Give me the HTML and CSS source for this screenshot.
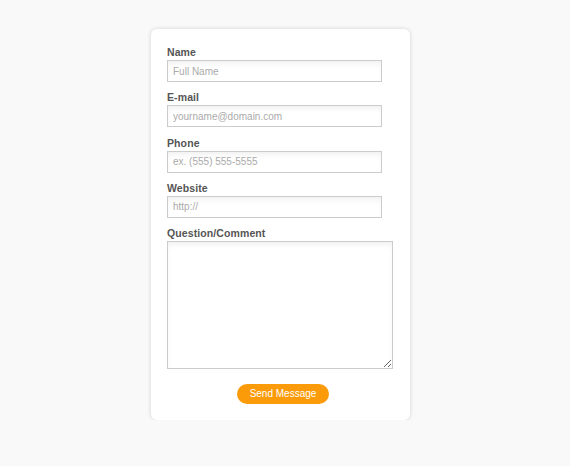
FILE: index.html
```html
<!DOCTYPE html>
<html lang="en">
<head>
  <meta charset="UTF-8">
  <title>Contact Form</title>
  <link rel="stylesheet" href="styles.css">
</head>
<body>

<form class="card" onsubmit="return false">
  <label for="name">Name</label>
  <input type="text" id="name" placeholder="Full Name">

  <label for="email">E-mail</label>
  <input type="text" id="email" placeholder="yourname@domain.com">

  <label for="phone">Phone</label>
  <input type="text" id="phone" placeholder="ex. (555) 555-5555">

  <label for="website">Website</label>
  <input type="text" id="website" placeholder="http://">

  <label for="comment">Question/Comment</label>
  <textarea id="comment"></textarea>

  <div class="actions">
    <button type="submit">Send Message</button>
  </div>
</form>

</body>
</html>
```

FILE: styles.css
```css
body { margin: 0; background: #f9f9f9; font-family: "Liberation Sans", Arial, sans-serif; }
.card { width: 259px; box-sizing: border-box; margin: 29px 0 0 151px; padding: 16px 17px 16px 16px; background: #fff; border-radius: 6px; box-shadow: 0 0 4px rgba(0,0,0,0.16); }
label { display: block; font-size: 10.5px; font-weight: bold; line-height: 14px; color: #555; margin-bottom: 1px; letter-spacing: 0.1px; }
input, textarea { display: block; box-sizing: border-box; border: 1px solid #ccc; font-family: inherit; font-size: 10px; color: #555; background: #fff; box-shadow: inset 0 4px 6px -2px rgba(0,0,0,0.07); outline: none; }
input { width: 215px; height: 22px; padding: 0 5px; margin-bottom: 8.25px; }
textarea { width: 226px; height: 128px; padding: 4px 5px; margin-bottom: 14px; }
input::placeholder { color: #aaa; }
.actions { text-align: center; padding-left: 6px; }
button { width: 92px; height: 20px; border: none; border-radius: 10px; background: #fb9b0a; color: #fff; font-family: inherit; font-size: 10px; padding: 0; }
```
